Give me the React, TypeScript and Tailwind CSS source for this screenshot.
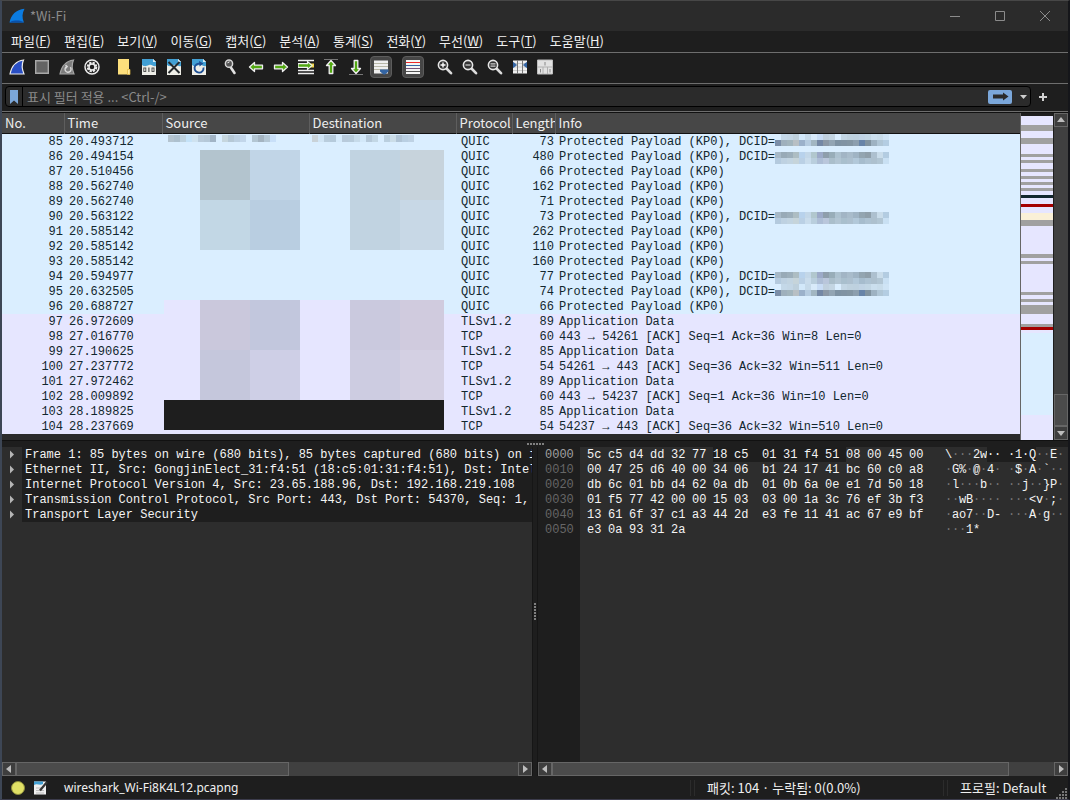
import React from "react";
import clsx from "clsx";

const menus = [
  ["파일", "F"],
  ["편집", "E"],
  ["보기", "V"],
  ["이동", "G"],
  ["캡처", "C"],
  ["분석", "A"],
  ["통계", "S"],
  ["전화", "Y"],
  ["무선", "W"],
  ["도구", "T"],
  ["도움말", "H"],
];

type Packet = { no: number; time: string; proto: string; len: number; info: string; mosaic?: "top" | "full" };

const dcid = "Protected Payload (KP0), DCID=";
const kp0 = "Protected Payload (KP0)";

const packets: Packet[] = [
  { no: 85, time: "20.493712", proto: "QUIC", len: 73, info: dcid, mosaic: "top" },
  { no: 86, time: "20.494154", proto: "QUIC", len: 480, info: dcid, mosaic: "full" },
  { no: 87, time: "20.510456", proto: "QUIC", len: 66, info: kp0 },
  { no: 88, time: "20.562740", proto: "QUIC", len: 162, info: kp0 },
  { no: 89, time: "20.562740", proto: "QUIC", len: 71, info: kp0 },
  { no: 90, time: "20.563122", proto: "QUIC", len: 73, info: dcid, mosaic: "full" },
  { no: 91, time: "20.585142", proto: "QUIC", len: 262, info: kp0 },
  { no: 92, time: "20.585142", proto: "QUIC", len: 110, info: kp0 },
  { no: 93, time: "20.585142", proto: "QUIC", len: 160, info: kp0 },
  { no: 94, time: "20.594977", proto: "QUIC", len: 77, info: dcid, mosaic: "full" },
  { no: 95, time: "20.632505", proto: "QUIC", len: 74, info: dcid, mosaic: "top" },
  { no: 96, time: "20.688727", proto: "QUIC", len: 66, info: kp0 },
  { no: 97, time: "26.972609", proto: "TLSv1.2", len: 89, info: "Application Data" },
  { no: 98, time: "27.016770", proto: "TCP", len: 60, info: "443 → 54261 [ACK] Seq=1 Ack=36 Win=8 Len=0" },
  { no: 99, time: "27.190625", proto: "TLSv1.2", len: 85, info: "Application Data" },
  { no: 100, time: "27.237772", proto: "TCP", len: 54, info: "54261 → 443 [ACK] Seq=36 Ack=32 Win=511 Len=0" },
  { no: 101, time: "27.972462", proto: "TLSv1.2", len: 89, info: "Application Data" },
  { no: 102, time: "28.009892", proto: "TCP", len: 60, info: "443 → 54237 [ACK] Seq=1 Ack=36 Win=10 Len=0" },
  { no: 103, time: "28.189825", proto: "TLSv1.2", len: 85, info: "Application Data" },
  { no: 104, time: "28.237669", proto: "TCP", len: 54, info: "54237 → 443 [ACK] Seq=36 Ack=32 Win=510 Len=0" },
];

const details = [
  "Frame 1: 85 bytes on wire (680 bits), 85 bytes captured (680 bits) on int",
  "Ethernet II, Src: GongjinElect_31:f4:51 (18:c5:01:31:f4:51), Dst: Intel_d",
  "Internet Protocol Version 4, Src: 23.65.188.96, Dst: 192.168.219.108",
  "Transmission Control Protocol, Src Port: 443, Dst Port: 54370, Seq: 1, Ac",
  "Transport Layer Security",
];

const hexRows = [
  "5c c5 d4 dd 32 77 18 c5 01 31 f4 51 08 00 45 00",
  "00 47 25 d6 40 00 34 06 b1 24 17 41 bc 60 c0 a8",
  "db 6c 01 bb d4 62 0a db 01 0b 6a 0e e1 7d 50 18",
  "01 f5 77 42 00 00 15 03 03 00 1a 3c 76 ef 3b f3",
  "13 61 6f 37 c1 a3 44 2d e3 fe 11 41 ac 67 e9 bf",
  "e3 0a 93 31 2a",
].map((row) => row.split(" "));

const LAV = "#e6e6ff";
const GRAY = "#a0a0a0";
const CYAN = "#daeeff";
const RED = "#a40000";

// [colour, height] from the top of the capture to the bottom
const minimap: [string, number][] = [
  [LAV, 9], [GRAY, 6], [LAV, 7], [GRAY, 6], [LAV, 10], [GRAY, 3], [LAV, 3], [GRAY, 3],
  [LAV, 6], [GRAY, 3], [LAV, 4], [GRAY, 3], [LAV, 3], [GRAY, 3], [LAV, 3], [GRAY, 3],
  [LAV, 4], ["#12272e", 3], [LAV, 6], [RED, 3], [LAV, 6], ["#faf0d7", 7], [GRAY, 6], [LAV, 28],
  [GRAY, 4], [LAV, 3], [GRAY, 3], [LAV, 28], [GRAY, 3], [LAV, 4], [GRAY, 3], [LAV, 3],
  [GRAY, 9], [LAV, 10], [GRAY, 3], [RED, 3], [LAV, 3], [CYAN, 82], [LAV, 25],
];

const mosaicSoft = "daeeff c4d8e8 c3d6e5 bed0dc d2e8fa c6daea d8eafa c8dcf5 c0d0de c3d5e3 daeeff c3d6e4 bfd2df bed1df c0d3e4 c2d6e4 cbdfee c8dcea cfe4f5".split(" ");
const mosaicDark = "7b8ea8 9fb0bd a3b5be b8bfc4 9bb1cb b5cbe0 a2b6c2 7588a5 8c98a6 93a5b4 7e92a3 8193a3 8395a3 8c9eae 6884a8 8193a0 9eb2c2 b0c6d6 b4cde2".split(" ");
const mosaicMid = "a7b9c7 98aab7 9dafbb adbdc3 b8d2ec c3d7e8 b1c7ce 9caac8 8e9eac 98adb9 adc2d0 a2b5c5 a9bccb a0b4c4 93a5b1 8f9faa adc0cf c9dcea b3cce1".split(" ");
const mosaicLow = "b4cade bed1e1 c2d4e1 c6d4da bad0e5 c9dcec b9cedd adbdd5 b9c6db aabecb b2c5d3 a9bfcd adc0cf b2c8d9 a6bccd adc2d2 adc0ce b2c6d4 c9e0f3".split(" ");
const addrStrip = "b4c4d0 adc0ce bed2df c4e2f8 cfe2ef b9cbdb b5c8d8 a1b4c6 daeeff c6d6de b5c8d6 bcd0e2 c2d6ea daeeff b3c6d3 a4b4c1 b5c8d6 c8dff8".split(" ");
const destStrip = "c9d2d8 d1e5f5 b9cddd b5cadb d5eafb b8cadb b8ccdc c7dbea d3e8f9 b6c9da c3d7e5 daeeff bacfdf cbdde8 b0c4d6 b9cfe2 bed2e4".split(" ");

function Cells({ colors, className }: { colors: string[]; className: string }) {
  return (
    <span className="flex">
      {colors.map((c, i) => (
        <span key={i} className={className} style={{ backgroundColor: `#${c}` }} />
      ))}
    </span>
  );
}

function DcidMosaic({ kind }: { kind: "top" | "full" }) {
  return (
    <span className={kind === "full" ? "pt-[3px]" : undefined}>
      <Cells colors={kind === "top" ? mosaicSoft : mosaicMid} className="h-1.5 w-1.5" />
      <Cells colors={kind === "top" ? mosaicDark : mosaicLow} className="h-1.5 w-1.5" />
    </span>
  );
}

function Icon({ children, size = 16 }: { children: React.ReactNode; size?: number }) {
  return (
    <svg width={size} height={size} viewBox="0 0 16 16" fill="none" aria-hidden="true" className="shrink-0">
      {children}
    </svg>
  );
}

function Tool({ label, pressed, children }: { label: string; pressed?: boolean; children: React.ReactNode }) {
  return (
    <button type="button" aria-label={label} aria-pressed={pressed} className="flex w-[25px] items-center justify-center">
      <span
        className={clsx(
          "flex h-[22px] w-[22px] items-center justify-center",
          pressed && "rounded-sm border border-[#5c5c5c] bg-[#464646]"
        )}
      >
        {children}
      </span>
    </button>
  );
}

const Sep = () => <div className="h-4 w-[7px] shrink-0" />;

function Magnifier({ children }: { children?: React.ReactNode }) {
  return (
    <Icon>
      <path d="M9.5 9.5l4.5 4.7" stroke="#dcdcdc" strokeWidth="2.6" strokeLinecap="round" />
      <circle cx="6" cy="6" r="4.6" fill="#333" stroke="#e6e6e6" strokeWidth="1.6" />
      {children}
    </Icon>
  );
}

function DocBase({ children }: { children: React.ReactNode }) {
  return (
    <Icon>
      <path d="M1 0h11l3 3v13H1z" fill="#efefe8" />
      <path d="M1 0h11l3 3v4c-3 1-4-2-7-1S4 8 1 6z" fill="#42a0d4" />
      <path d="M12 0v3h3z" fill="#d8ecf5" />
      {children}
    </Icon>
  );
}

function Arrow({ turn }: { turn: number }) {
  return (
    <Icon>
      <g transform={`rotate(${turn} 8 8)`}>
        <path d="M1.5 8l5-4.5v2.7h8v3.6h-8v2.7z" fill="#52a812" stroke="#f0f0f0" strokeWidth="1.3" strokeLinejoin="round" />
      </g>
      {turn === 90 && <path d="M1 .5h14" stroke="#777" />}
      {turn === 270 && <path d="M1 15.5h14" stroke="#777" />}
    </Icon>
  );
}

function Toolbar() {
  return (
    <div role="toolbar" className="flex h-[30px] shrink-0 items-center border-t border-[#6e6e6e] bg-[#1e1e1e] pb-0.5 pl-0.5">
      <Tool label="캡처 시작">
        <Icon>
          <path d="M1 15C2.5 7.5 7 2 14.5 1c-2 4.5-1.5 9.5.5 14z" fill="#2a4fc4" stroke="#ededed" strokeWidth="1.2" />
        </Icon>
      </Tool>
      <Tool label="캡처 중지">
        <Icon>
          <path d="M1.7 1.7h12.6v12.6H1.7z" fill="#646464" stroke="#a8a8a8" strokeWidth="1.4" />
        </Icon>
      </Tool>
      <Tool label="캡처 다시 시작">
        <Icon>
          <path d="M1 15C2.5 7.5 7 2 14.5 1c-2 4.5-1.5 9.5.5 14z" fill="#7c7c7c" stroke="#a6a6a6" strokeWidth="1.2" />
          <path d="M11.3 8.3a3 3 0 1 1-3.8-.6M6.5 6l1.7 1.500-1.500 1.900" stroke="#d8d8d8" strokeWidth="1.4" />
        </Icon>
      </Tool>
      <Tool label="캡처 옵션">
        <Icon>
          <circle cx="8" cy="8" r="7" stroke="#ececec" strokeWidth="1.5" />
          <circle cx="8" cy="8" r="4.3" stroke="#ececec" strokeWidth="2" strokeDasharray="2.3 1.08" />
          <circle cx="8" cy="8" r="3" stroke="#ececec" strokeWidth="1.5" />
        </Icon>
      </Tool>
      <Sep />
      <Tool label="열기">
        <Icon>
          <path d="M2 0h11v10h1v5.5H2z" fill="#fddf7c" />
          <path d="M11.5 10.5h2.500v5h-2.500z" fill="#ffeaa0" stroke="#e0b840" strokeWidth=".7" />
        </Icon>
      </Tool>
      <Tool label="저장">
        <DocBase>
          <rect x="2.8" y="9" width="2" height="3.5" stroke="#444" strokeWidth=".9" />
          <path d="M7.9 8.5v4.5" stroke="#444" strokeWidth="1.1" />
          <rect x="11" y="9" width="2" height="3.5" stroke="#444" strokeWidth=".9" />
        </DocBase>
      </Tool>
      <Tool label="닫기">
        <DocBase>
          <path d="M2.5 3l11 11M13.5 3l-11 11" stroke="#25292c" strokeWidth="2" />
        </DocBase>
      </Tool>
      <Tool label="다시 불러오기">
        <DocBase>
          <path d="M12.5 8.5A4.5 4.5 0 1 1 9 4.7" stroke="#1e4f94" strokeWidth="1.9" />
          <path d="M8 2l4.5 2.5L8.5 7.5z" fill="#1e4f94" />
        </DocBase>
      </Tool>
      <Sep />
      <Tool label="패킷 찾기">
        <Icon>
          <path d="M7.5 8l4 6" stroke="#e2e2e2" strokeWidth="2.6" strokeLinecap="round" />
          <circle cx="6" cy="4.7" r="3.6" fill="#555" stroke="#d8d8d8" strokeWidth="1.5" />
          <path d="M4.5 3.8l2-1" stroke="#fff" />
        </Icon>
      </Tool>
      <Tool label="이전 패킷"><Arrow turn={0} /></Tool>
      <Tool label="다음 패킷"><Arrow turn={180} /></Tool>
      <Tool label="패킷으로 이동">
        <Icon>
          <path d="M0 1.5h16M0 11.5h16M0 14.5h16" stroke="#f0f0f0" strokeWidth="1.7" />
          <path d="M8 4.5h8v4H8z" fill="#f5d84c" />
          <path d="M14 6.5l-4.5-4v2.2H0v3.6h9.5v2.2z" fill="#52a812" stroke="#f0f0f0" strokeWidth="1.2" />
        </Icon>
      </Tool>
      <Tool label="첫 패킷"><Arrow turn={90} /></Tool>
      <Tool label="마지막 패킷"><Arrow turn={270} /></Tool>
      <Tool label="자동 스크롤" pressed>
        <Icon>
          <path d="M1 1.5h14v13H1z" fill="#efefef" />
          <path d="M1 4.5h14M1 7.5h14M1 10.5h14" stroke="#b8b8a8" />
          <path d="M7 10.5h8.5v2L12 15.5h-1.500L7 12.5z" fill="#3465a4" />
        </Icon>
      </Tool>
      <Sep />
      <Tool label="패킷 색상 지정" pressed>
        <Icon>
          <path d="M1 1h14v14H1z" fill="#f4f4f4" />
          <path d="M1 3.5h14" stroke="#ef2929" />
          <path d="M1 6.5h14" stroke="#3465a4" />
          <path d="M1 9.5h14" stroke="#75507b" />
          <path d="M1 12.5h14" stroke="#555" />
        </Icon>
      </Tool>
      <Sep />
      <Tool label="확대">
        <Magnifier><path d="M3.5 6h5M6 3.5v5" stroke="#fff" strokeWidth="1.4" /></Magnifier>
      </Tool>
      <Tool label="축소">
        <Magnifier><path d="M3.5 6h5" stroke="#aaa" strokeWidth="1.6" /></Magnifier>
      </Tool>
      <Tool label="원래 크기">
        <Magnifier><path d="M3.5 4.8h5M3.5 7.2h5" stroke="#ccc" strokeWidth="1.2" /></Magnifier>
      </Tool>
      <Tool label="열 크기 조정">
        <Icon>
          <path d="M1 1.5h14v13H1z" fill="#f0f0f0" />
          <path d="M1 4.5h14M1 8h14M1 11.5h14" stroke="#ccc" />
          <path d="M5.5 1v14M10.5 1v14" stroke="#777" />
          <path d="M1.5 3.5L4.5 6 1.5 8.5zM14.5 3.5l-3 2.5 3 2.5z" fill="#3465a4" stroke="#3465a4" />
        </Icon>
      </Tool>
      <Tool label="레이아웃">
        <Icon>
          <path d="M.5 1h15v14H.5z" fill="#e2e2e2" stroke="#bdbdbd" />
          <path d="M0 8h16M6 8v7M10.5 8v7" stroke="#b0b0b0" />
          <path d="M8 3v3.5M3.5 10v3.5M13 10v3.5" stroke="#888" />
        </Icon>
      </Tool>
    </div>
  );
}

function Fin() {
  return (
    <Icon>
      <path d="M.5 14.5C2 7 7 1.5 15.5.8c-2.5 4.5-2.5 9.2-.6 13.7z" fill="#0b7be0" />
      <path d="M2 13.5C5 12 11 12 14 13.7l.5.8H1z" fill="#0a4fa8" />
    </Icon>
  );
}

function TitleBar() {
  return (
    <header className="flex h-[30px] shrink-0 items-center bg-[#2b2b2b] pl-[7px] text-[#8b8b8b]">
      <Fin />
      <h1 className="ml-[5px] flex-1">*Wi-Fi</h1>
      <button type="button" aria-label="최소화" className="flex h-full w-[46px] items-center justify-center">
        <svg width="10" height="10" aria-hidden="true"><path d="M0 5.5h10" stroke="#8b8b8b" /></svg>
      </button>
      <button type="button" aria-label="최대화" className="flex h-full w-11 items-center justify-center">
        <svg width="10" height="10" aria-hidden="true"><path d="M.5.5h9v9h-9z" fill="none" stroke="#8b8b8b" /></svg>
      </button>
      <button type="button" aria-label="닫기" className="flex h-full w-[46px] items-center justify-center">
        <svg width="10" height="10" aria-hidden="true"><path d="M0 0l10 10M10 0L0 10" stroke="#8b8b8b" /></svg>
      </button>
    </header>
  );
}

function FilterBar() {
  return (
    <div className="flex h-7 shrink-0 items-center border-t border-[#6e6e6e] bg-[#1e1e1e] pb-0.5 pl-[3px]">
      <div className="flex h-[21px] flex-1 items-center rounded-sm border border-black bg-[#2b2b2b]">
        <button type="button" aria-label="책갈피" className="flex h-full w-[17px] items-center justify-center border-r border-black">
          <svg width="8" height="14" aria-hidden="true"><path d="M0 0h8v14l-4-3.5L0 14z" fill="#7ba7da" /></svg>
        </button>
        <input
          type="text"
          aria-label="표시 필터"
          placeholder="표시 필터 적용 ... <Ctrl-/>"
          className="h-full min-w-0 flex-1 bg-transparent px-1 text-white outline-none placeholder:text-[#8a8a8a]"
        />
        <button type="button" aria-label="적용" className="flex h-3.5 w-6 items-center justify-center rounded-xs bg-[#7ba7da]">
          <svg width="17" height="9" aria-hidden="true"><path d="M1 2.5h10V.5l5.5 4-5.5 4v-2H1z" fill="#2b2b2b" /></svg>
        </button>
        <button type="button" aria-label="최근 필터" className="flex h-full w-[18px] items-center justify-center pl-1">
          <svg width="7" height="4" aria-hidden="true"><path d="M0 0h7L3.5 4z" fill="#cfcfcf" /></svg>
        </button>
      </div>
      <button type="button" aria-label="필터 추가" className="flex w-[37px] pl-2">
        <svg width="8" height="8" aria-hidden="true"><path d="M4 0v8M0 4h8" stroke="#d0d0d0" strokeWidth="2" /></svg>
      </button>
    </div>
  );
}

const glyphs = {
  up: "M0 6h8L4 1z",
  down: "M0 2h8L4 7z",
  left: "M6 0v8L1 4z",
  right: "M2 0v8l5-4z",
};

function ScrollButton({ dir }: { dir: keyof typeof glyphs }) {
  return (
    <button type="button" aria-label={dir} className="flex h-3.5 w-3.5 shrink-0 items-center justify-center border border-[#666] bg-[#3e3e3e]">
      <svg width="8" height="8" aria-hidden="true"><path d={glyphs[dir]} fill="#bdbdbd" /></svg>
    </button>
  );
}

function HScroll({ thumb }: { thumb: string }) {
  return (
    <div className="flex h-3.5 shrink-0 bg-[#404040]">
      <ScrollButton dir="left" />
      <div className={clsx("border border-[#666] bg-[#4b4b4b]", thumb)} />
      <div className="flex-1" />
      <ScrollButton dir="right" />
    </div>
  );
}

const th = "h-5 overflow-hidden whitespace-nowrap border-r border-[#5e5e5e] p-0 pl-[3px] text-left font-normal last:border-r-0";
const td = "p-0 pt-0.5";

function PacketList() {
  return (
    <section className="flex h-[328px] shrink-0 border-t border-[#111] bg-[#2b2b2b]">
      <div className="relative min-w-0 flex-1 overflow-hidden">
        <table className="w-full table-fixed border-collapse">
          <colgroup>
            <col className="w-[62px]" />
            <col className="w-[98px]" />
            <col className="w-[147px]" />
            <col className="w-[147px]" />
            <col className="w-[56px]" />
            <col className="w-[43px]" />
            <col />
          </colgroup>
          <thead className="border-b border-[#111] bg-[#474747] leading-5 text-[#eee]">
            <tr>
              <th className={th}>No.</th>
              <th className={th}>Time</th>
              <th className={th}>Source</th>
              <th className={th}>Destination</th>
              <th className={th}>Protocol</th>
              <th className={th}>Length</th>
              <th className={th}>Info</th>
            </tr>
          </thead>
          <tbody className="font-['Liberation_Mono',monospace] text-xs leading-[13px] text-[#12272e]">
            {packets.map((p) => (
              <tr key={p.no} className={clsx("h-[15px]", p.proto === "QUIC" ? "bg-[#daeeff]" : "bg-[#e6e6ff]")}>
                <td className={clsx(td, "pr-px text-right")}>{p.no}</td>
                <td className={clsx(td, "pl-[5px]")}>{p.time}</td>
                <td className="p-0" />
                <td className="p-0" />
                <td className={clsx(td, "pl-[5px]")}>{p.proto}</td>
                <td className={clsx(td, "pr-px text-right")}>{p.len}</td>
                <td className="p-0 pl-1">
                  <div className="flex h-[15px] items-start whitespace-nowrap">
                    <span className="pt-0.5">{p.info}</span>
                    {p.mosaic && <DcidMosaic kind={p.mosaic} />}
                  </div>
                </td>
              </tr>
            ))}
          </tbody>
        </table>

        {/* redacted addresses */}
        <div className="absolute left-[166px] top-[22px]"><Cells colors={addrStrip} className="h-[7px] w-1.5" /></div>
        <div className="absolute left-[310px] top-[22px]"><Cells colors={destStrip} className="h-[7px] w-1.5" /></div>
        <div className="absolute left-[198px] top-[37px] grid grid-cols-2">
          <div className="size-[50px] bg-[#b3c4ce]" />
          <div className="size-[50px] bg-[#c1d5e7]" />
          <div className="size-[50px] bg-[#c2d7e5]" />
          <div className="size-[50px] bg-[#b9cee1]" />
        </div>
        <div className="absolute left-[348px] top-[37px] flex">
          <div className="h-[100px] w-[50px] bg-[#c1d3e1]" />
          <div>
            <div className="h-[50px] w-11 bg-[#c7d3dc]" />
            <div className="h-[50px] w-11 bg-[#c8d8e6]" />
          </div>
        </div>
        <div className="absolute left-[162px] top-[187px] h-[100px] w-[280px] bg-[#e6e6ff]">
          <div className="flex pl-9">
            <div className="size-[50px] bg-[#cac8dc]" />
            <div className="size-[50px] bg-[#c2c7dd]" />
            <div className="ml-[50px] size-[50px] bg-[#cac9de]" />
            <div className="h-[50px] w-11 bg-[#d0cbde]" />
          </div>
          <div className="flex pl-9">
            <div className="size-[50px] bg-[#c5c7dc]" />
            <div className="size-[50px] bg-[#cecfe6]" />
            <div className="ml-[50px] size-[50px] bg-[#cdcce1]" />
            <div className="h-[50px] w-11 bg-[#d4d0e3]" />
          </div>
        </div>
        <div className="absolute left-[162px] top-[287px] h-[30px] w-[280px] bg-[#1e1e1e]" />
      </div>

      <div className="w-[34px] border-l border-[#666] bg-[#1e1e1e] pr-px pt-[3px]">
        {minimap.map(([color, height], i) => (
          <div key={i} style={{ backgroundColor: color, height }} />
        ))}
      </div>

      <div className="flex w-3.5 flex-col bg-[#404040]">
        <ScrollButton dir="up" />
        <div className="flex-1" />
        <div className="h-8 border border-[#666] bg-[#4b4b4b]" />
        <ScrollButton dir="down" />
      </div>
    </section>
  );
}

function Grip({ vertical }: { vertical?: boolean }) {
  return (
    <div className={clsx("flex gap-px", vertical && "flex-col")}>
      {[0, 1, 2, 3, 4, 5].map((i) => (
        <span key={i} className="size-0.5 bg-[#808080]" />
      ))}
    </div>
  );
}

function DetailPane() {
  return (
    <section className="flex min-w-0 flex-1 flex-col bg-[#2d2d2d]">
      <ul className="flex-1 overflow-hidden">
        {details.map((line) => (
          <li key={line} className="flex h-[15px] items-center">
            <svg width="20" height="9" aria-hidden="true" className="shrink-0"><path d="M8 .5v8l4-4z" fill="#b5b5b5" /></svg>
            <span className="h-[15px] min-w-0 flex-1 overflow-hidden whitespace-pre bg-[#1e1e1e] pl-[3px]">{line}</span>
          </li>
        ))}
      </ul>
      <HScroll thumb="w-[273px]" />
    </section>
  );
}

const isMarked = (row: number, i: number) => row === 0 && i >= 6 && i < 12;

const toAscii = (byte: string) => {
  const code = parseInt(byte, 16);
  return code > 32 && code < 127 ? String.fromCharCode(code) : "·";
};

function BytesPane() {
  return (
    <section className="flex min-w-0 flex-1 flex-col bg-[#2d2d2d]">
      <div className="flex flex-1 overflow-hidden">
        <div className="w-[42px] shrink-0 bg-[#1e1e1e] pl-[7px] text-[#666]">
          {hexRows.map((_, r) => (
            <div key={r} className={clsx("h-[15px]", r === 0 && "text-[#a0a0a0]")}>{`00${r}0`}</div>
          ))}
        </div>
        <div className="pl-[7px]">
          {hexRows.map((row, r) => (
            <div key={r} className="flex h-[15px]">
              <div className="flex w-[358px]">
                {row.map((byte, i) => (
                  <span
                    key={i}
                    className={clsx(
                      "whitespace-nowrap",
                      i === 7 ? "w-7" : "w-[21px]",
                      isMarked(r, i) && "bg-[#1e1e1e]"
                    )}
                  >
                    {byte}
                  </span>
                ))}
              </div>
              <div className="flex">
                {row.map((byte, i) => {
                  const char = toAscii(byte);
                  return (
                    <span
                      key={i}
                      className={clsx(
                        i === 7 ? "w-3.5" : "w-[7px]",
                        isMarked(r, i) ? "bg-[#1e1e1e]" : char === "·" && "text-[#777]"
                      )}
                    >
                      {char}
                    </span>
                  );
                })}
              </div>
            </div>
          ))}
        </div>
      </div>
      <HScroll thumb="w-[457px]" />
    </section>
  );
}

const StatusSep = () => <div className="h-4 w-[5px] border-x border-[#2c2c2c]" />;

function StatusBar() {
  return (
    <footer className="flex h-[23px] shrink-0 items-center bg-[#1e1e1e] text-[#f0f0f0]">
      <button type="button" aria-label="전문가 정보" className="ml-[9px] size-3.5 rounded-full border border-[#8d8d3a] bg-[#e0e066]" />
      <button type="button" aria-label="캡처 파일 속성" className="ml-[7px]">
        <Icon>
          <path d="M2 1.5h12v13H2z" fill="#efefef" />
          <path d="M2 1.5h9V4c-3 2-6-1-9 1z" fill="#42a0d4" />
          <path d="M4 8h6M4 10.5h8M4 13h8" stroke="#bbb" />
          <path d="M15 2L8 10.5" stroke="#333" strokeWidth="2.2" />
        </Icon>
      </button>
      <span className="ml-4 flex-1 font-['Noto_Sans',sans-serif] text-xs">wireshark_Wi-Fi8K4L12.pcapng</span>
      <StatusSep />
      <span className="w-[248px] pl-3">패킷: 104 · 누락됨: 0(0.0%)</span>
      <StatusSep />
      <span className="w-[108px] pl-3">프로필: Default</span>
      <svg width="11" height="11" aria-hidden="true" className="mr-px self-end">
        <path d="M0 10h11M3 7h8M6 4h5M9 1h2" stroke="#777" strokeWidth="2" strokeDasharray="2 1" />
      </svg>
    </footer>
  );
}

export default function App() {
  return (
    <div className="flex h-screen flex-col overflow-hidden border-b border-l-2 border-r-2 border-t border-b-[#3c3c4c] border-l-[#3d4655] border-r-[#15161a] border-t-[#474747] bg-[#1e1e1e] font-['Noto_Sans_CJK_KR',sans-serif] text-[13px] leading-5">
      <TitleBar />
      <nav className="flex h-[21px] shrink-0 items-center gap-[13px] bg-[#1e1e1e] pb-0.5 pl-[9px] text-[#f0f0f0]">
        {menus.map(([name, key]) => (
          <button key={key} type="button" className="whitespace-nowrap">
            {name}(<u>{key}</u>)
          </button>
        ))}
      </nav>
      <Toolbar />
      <div className="h-px shrink-0 bg-[#1e1e1e]" />
      <FilterBar />
      <div className="h-px shrink-0 bg-[#6e6e6e]" />
      <PacketList />
      <div className="flex h-[7px] shrink-0 justify-center border-t border-[#111] pt-0.5">
        <Grip />
      </div>
      <div className="flex min-h-0 flex-1 font-['Liberation_Mono',monospace] text-xs leading-[17px] text-[#f4f4f4]">
        <DetailPane />
        <div className="flex w-1.5 items-center justify-center border-x border-[#161616]">
          <Grip vertical />
        </div>
        <BytesPane />
      </div>
      <StatusBar />
    </div>
  );
}
